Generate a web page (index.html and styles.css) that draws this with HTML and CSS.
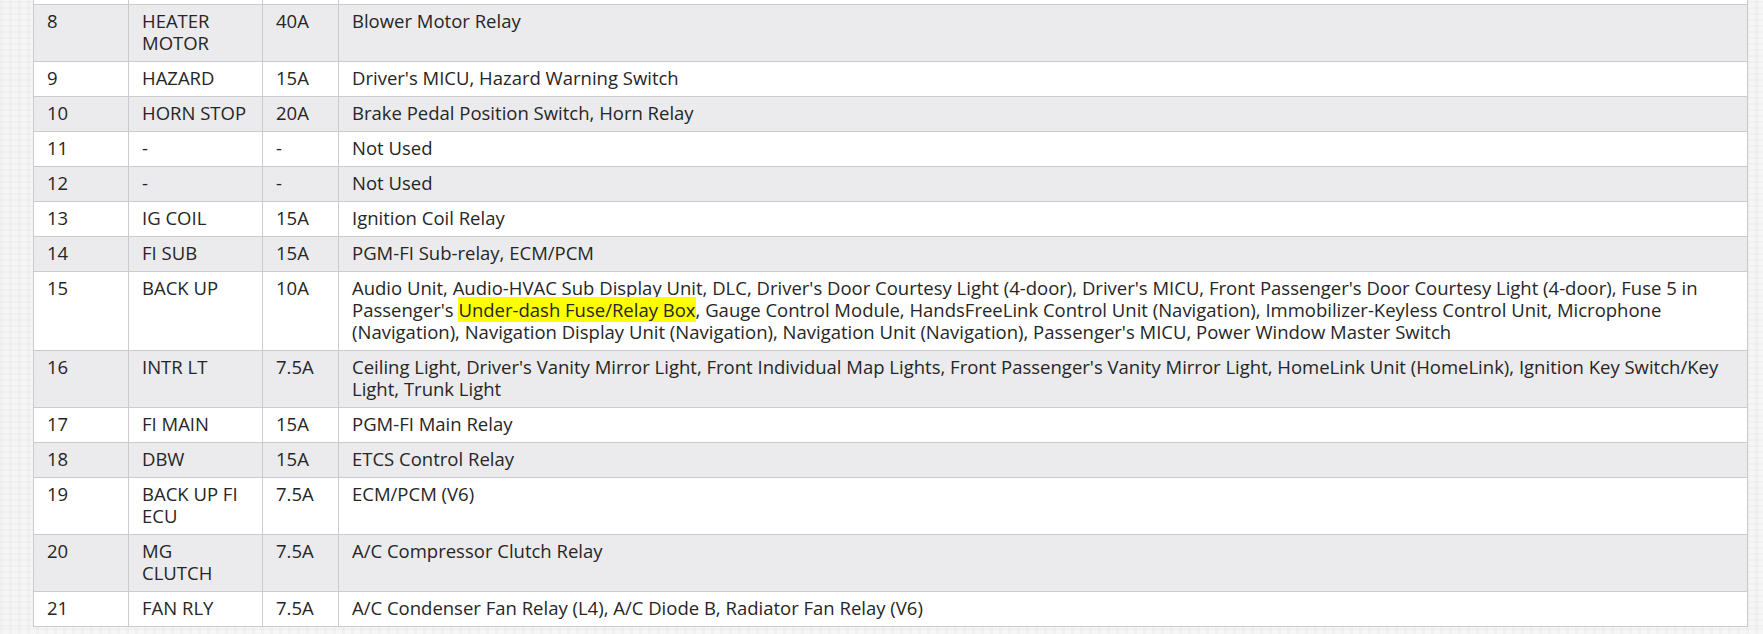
FILE: index.html
```html
<!DOCTYPE html>
<html lang="en">
<head>
<meta charset="utf-8">
<title>Fuse table</title>
<link rel="stylesheet" href="styles.css">
</head>
<body>
<div class="page">
<table class="fuses">
<colgroup><col class="c-no"><col class="c-name"><col class="c-amp"><col class="c-desc"></colgroup>
<tbody>
<tr class="cut"><td></td><td></td><td></td><td></td></tr>
<tr class="alt"><td>8</td><td>HEATER MOTOR</td><td>40A</td><td>Blower Motor Relay</td></tr>
<tr><td>9</td><td>HAZARD</td><td>15A</td><td>Driver's MICU, Hazard Warning Switch</td></tr>
<tr class="alt"><td>10</td><td>HORN STOP</td><td>20A</td><td>Brake Pedal Position Switch, Horn Relay</td></tr>
<tr><td>11</td><td>-</td><td>-</td><td>Not Used</td></tr>
<tr class="alt"><td>12</td><td>-</td><td>-</td><td>Not Used</td></tr>
<tr><td>13</td><td>IG COIL</td><td>15A</td><td>Ignition Coil Relay</td></tr>
<tr class="alt"><td>14</td><td>FI SUB</td><td>15A</td><td>PGM-FI Sub-relay, ECM/PCM</td></tr>
<tr><td>15</td><td>BACK UP</td><td>10A</td><td>Audio Unit, Audio-HVAC Sub Display Unit, DLC, Driver's Door Courtesy Light (4-door), Driver's MICU, Front Passenger's Door Courtesy Light (4-door), Fuse 5 in<br>Passenger's <mark>Under-dash Fuse/Relay Box</mark>, Gauge Control Module, HandsFreeLink Control Unit (Navigation), Immobilizer-Keyless Control Unit, Microphone<br>(Navigation), Navigation Display Unit (Navigation), Navigation Unit (Navigation), Passenger's MICU, Power Window Master Switch</td></tr>
<tr class="alt"><td>16</td><td>INTR LT</td><td>7.5A</td><td>Ceiling Light, Driver's Vanity Mirror Light, Front Individual Map Lights, Front Passenger's Vanity Mirror Light, HomeLink Unit (HomeLink), Ignition Key Switch/Key<br>Light, Trunk Light</td></tr>
<tr><td>17</td><td>FI MAIN</td><td>15A</td><td>PGM-FI Main Relay</td></tr>
<tr class="alt"><td>18</td><td>DBW</td><td>15A</td><td>ETCS Control Relay</td></tr>
<tr><td>19</td><td>BACK UP FI ECU</td><td>7.5A</td><td>ECM/PCM (V6)</td></tr>
<tr class="alt"><td>20</td><td>MG<br>CLUTCH</td><td>7.5A</td><td>A/C Compressor Clutch Relay</td></tr>
<tr><td>21</td><td>FAN RLY</td><td>7.5A</td><td>A/C Condenser Fan Relay (L4), A/C Diode B, Radiator Fan Relay (V6)</td></tr>
</tbody>
</table>
</div>
</body>
</html>
```
FILE: styles.css
```css
html, body {
  margin: 0;
  padding: 0;
}
body {
  background-color: #f6f6f6;
  background-image:
    repeating-linear-gradient(0deg, rgba(0,0,0,0.018) 0 2px, transparent 2px 6px),
    repeating-linear-gradient(90deg, rgba(0,0,0,0.018) 0 3px, transparent 3px 9px);
  font-family: "Open Sans", "Noto Sans", sans-serif;
  color: #262626;
}
.page {
  padding: 0 15px 0 33px;
}
.fuses {
  width: 1715px;
  border-collapse: collapse;
  table-layout: fixed;
  background: #fff;
  font-size: 18.5px;
  line-height: 22px;
}
.c-no { width: 95px; }
.c-name { width: 134px; }
.c-amp { width: 76px; }
.fuses td {
  border: 1px solid #cbcbcb;
  padding: 5px 13px 7px 13px;
  vertical-align: top;
  text-align: left;
}
.fuses tr.alt td {
  background: #ebebed;
}
.fuses tr.cut td {
  border-top: none;
  padding: 0;
  height: 4px;
  line-height: 4px;
}
.fuses mark {
  background: #ffff00;
  color: inherit;
}
```
